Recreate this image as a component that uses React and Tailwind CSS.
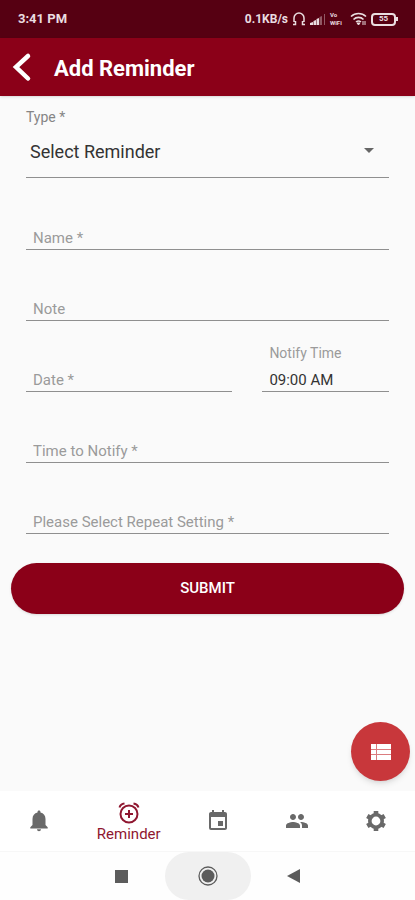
import { useState } from 'react';
import { MdArrowDropDown, MdEvent, MdPeople } from 'react-icons/md';

const NAV_ITEMS = [
  { id: 'alerts', label: 'Notifications', icon: BellIcon },
  { id: 'reminder', label: 'Reminder', icon: AlarmIcon },
  { id: 'calendar', label: 'Calendar', icon: MdEvent },
  { id: 'people', label: 'People', icon: MdPeople },
  { id: 'settings', label: 'Settings', icon: GearIcon },
];

export default function App() {
  const [active, setActive] = useState('reminder');

  return (
    <div className="flex min-h-screen flex-col bg-[#fafafa] font-['Roboto',sans-serif]">
      <StatusBar />

      <header className="flex h-[58px] items-center gap-5 bg-[#8b0018] pl-3 shadow">
        <button type="button" aria-label="Back" className="text-white">
          <svg
            className="h-[30px] w-[22px]"
            viewBox="0 0 22 30"
            fill="none"
            stroke="currentColor"
            strokeWidth="4.500"
            strokeLinecap="round"
          >
            <path d="M16 4 4 15l12 11.500" />
          </svg>
        </button>
        <h1 className="pt-[2px] text-[22px] font-bold text-white">Add Reminder</h1>
      </header>

      <main className="relative flex-1">
        <form onSubmit={(e) => e.preventDefault()}>
          <div className="px-[26px] pt-3">
            <label htmlFor="type" className="block text-[14px] leading-[18px] text-[#858585]">
              Type *
            </label>
            <div className="relative">
              <select
                id="type"
                className="h-[52px] w-full appearance-none border-b border-[#8f8f8f] bg-transparent pl-1 text-[18px] text-[#333] outline-none"
              >
                <option>Select Reminder</option>
              </select>
              <MdArrowDropDown className="pointer-events-none absolute top-3 right-2 h-6 w-6 text-[#666]" />
            </div>

            <div className="pt-px">
              <Field name="Name *" />
              <Field name="Note" />
              <div className="flex gap-[30px]">
                <div className="flex-[207]">
                  <Field name="Date *" />
                </div>
                <div className="flex-[127]">
                  <Field name="Notify Time" value="09:00 AM" />
                </div>
              </div>
              <Field name="Time to Notify *" />
              <Field name="Please Select Repeat Setting *" />
            </div>
          </div>

          <div className="px-[11px] pt-[29px]">
            <button
              type="submit"
              className="h-[51px] w-full rounded-full bg-[#8b0018] text-[15px] font-medium text-white shadow-sm"
            >
              SUBMIT
            </button>
          </div>
        </form>

        <button
          type="button"
          aria-label="Reminder list"
          className="absolute right-[5px] bottom-[10px] flex h-[59px] w-[59px] items-center justify-center rounded-full bg-[#c8373b] text-white shadow-md"
        >
          <svg className="h-4 w-5" viewBox="0 0 20 16">
            <path d="M0 0h20v16H0z" fill="currentColor" />
            <path d="M0 5.500h20M0 10.500h20M5.500 0v16" stroke="#c8373b" strokeWidth="1" opacity="0.65" />
          </svg>
        </button>
      </main>

      <nav className="flex h-[60px] bg-white">
        {NAV_ITEMS.map(({ id, label, icon: Icon }) => (
          <button
            key={id}
            type="button"
            aria-label={label}
            onClick={() => setActive(id)}
            className={`flex flex-col items-center justify-center ${
              active === id ? 'w-[100px] pt-[2px] text-[#8f1730]' : 'flex-1 text-[#696969]'
            }`}
          >
            <Icon className="h-6 w-6" />
            {active === id && <span className="text-[15px] leading-[18px]">{label}</span>}
          </button>
        ))}
      </nav>

      <SystemNav />
    </div>
  );
}

function Field({ name, value }) {
  return (
    <label className="flex h-[71px] flex-col justify-end border-b border-[#8f8f8f] pb-px pl-[7px]">
      {value && <span className="text-[14px] leading-[18px] text-[#9b9b9b]">{name}</span>}
      <input
        type="text"
        aria-label={name}
        placeholder={value ? undefined : name}
        defaultValue={value}
        className="mt-2 h-5 w-full bg-transparent text-[15px] text-[#333] outline-none placeholder:text-[#9b9b9b]"
      />
    </label>
  );
}

function StatusBar() {
  return (
    <div className="flex h-[38px] items-center justify-between bg-[#560012] pr-[17px] pl-[18px] text-[13px] font-bold text-[#eadde0]">
      <span>3:41 PM</span>
      <div className="flex items-center gap-1">
        <span className="text-[12px]">0.1KB/s</span>
        {/* headset */}
        <svg className="h-[14px] w-[14px]" viewBox="0 0 14 14" fill="none" stroke="currentColor" strokeWidth="1.500">
          <path d="M2 10V6a5 5 0 0 1 10 0v4M1 12.500h2.500V9M13 12.500h-2.500V9" />
        </svg>
        {/* signal */}
        <svg className="h-[12px] w-[16px]" viewBox="0 0 16 12" fill="currentColor">
          <path d="M0 12v-2l3-1v3zM3.500 12V8l2.500-1v5zM6.500 12V6L9 5v7z" />
          <path d="M9.500 12V4l2.500-1v9zM14 12V1h1v11z" opacity="0.4" />
        </svg>
        <span className="flex w-[16px] flex-col text-[6px] leading-[8px]">
          <span>Vo</span>
          <span>WiFi</span>
        </span>
        {/* wifi */}
        <svg className="h-[14px] w-[17px]" viewBox="0 0 17 14" fill="none" stroke="currentColor" strokeWidth="1.600">
          <path d="M1 4.500a11 11 0 0 1 15 0M3.500 7.500a7 7 0 0 1 10 0M6 10a4 4 0 0 1 5 0" />
          <path d="m8.500 13-1.500-2h3zM13 9v4M15 9v4" strokeWidth="1" fill="currentColor" />
        </svg>
        <span className="flex items-center">
          <span className="flex h-[13px] w-[25px] items-center justify-center rounded border-2 border-current text-[8px] leading-none">
            55
          </span>
          <span className="h-1 w-[2px] bg-current" />
        </span>
      </div>
    </div>
  );
}

function BellIcon({ className }) {
  return (
    <svg className={className} viewBox="0 0 24 24" fill="currentColor">
      <path d="M12 1.500c.9 0 1.500.6 1.500 1.500v.6c3.100.7 5 3 5 6.400v6l2.200 2.300V19.500H3.300v-1.200L5.500 16v-6c0-3.400 1.900-5.700 5-6.400V3c0-.9.600-1.500 1.500-1.500zM10 20.300h4c0 1.100-.9 2-2 2s-2-.9-2-2z" />
    </svg>
  );
}

function AlarmIcon({ className }) {
  return (
    <svg className={className} viewBox="0 0 24 24" fill="none" stroke="currentColor" strokeWidth="2">
      <circle cx="12" cy="13" r="8.500" />
      <path d="M12 9v8M8 13h8" />
      <path d="M2.500 6.500Q3.500 3 7.500 2.500M21.500 6.500q-1-3.500-5-4" />
    </svg>
  );
}

function GearIcon({ className }) {
  return (
    <svg className={className} viewBox="0 0 24 24" fill="none" stroke="currentColor">
      <circle cx="12" cy="12" r="6.200" strokeWidth="3.600" />
      <path
        d="M12 2v4M12 18v4M3.300 7l3.500 2M17.200 15l3.500 2M3.300 17l3.500-2M17.200 9l3.500-2"
        strokeWidth="4.600"
      />
    </svg>
  );
}

function SystemNav() {
  return (
    <div className="flex h-[49px] justify-center border-t border-[#f7f7f7] bg-[#fefefe] text-[#5c5c5c]">
      <button type="button" aria-label="Recent apps" className="flex w-[86px] items-center justify-center">
        <span className="h-[13px] w-[13px] bg-current" />
      </button>
      <button type="button" aria-label="Home" className="flex w-[86px] items-center justify-center rounded-full bg-[#f0f0f0]">
        <svg className="h-5 w-5" viewBox="0 0 20 20" fill="currentColor">
          <circle cx="10" cy="10" r="9" fill="none" stroke="currentColor" strokeWidth="1.300" />
          <circle cx="10" cy="10" r="6.500" />
        </svg>
      </button>
      <button type="button" aria-label="Go back" className="flex w-[86px] items-center justify-center">
        <svg className="h-[14px] w-[13px]" viewBox="0 0 13 14" fill="currentColor">
          <path d="M13 0v14L0 7z" />
        </svg>
      </button>
    </div>
  );
}
